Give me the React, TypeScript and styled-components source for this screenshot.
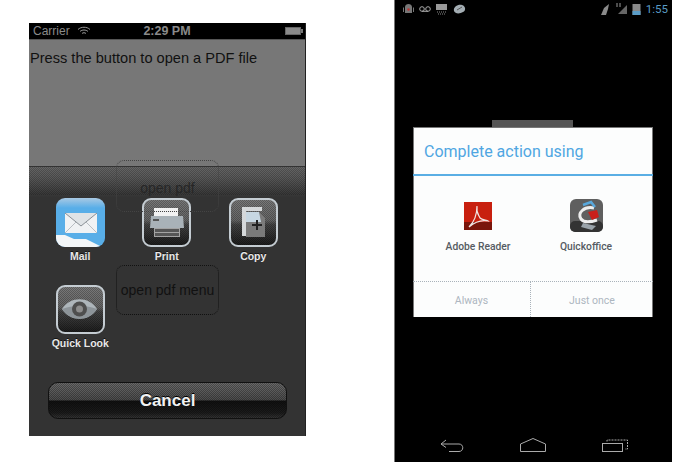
import React from 'react';
import styled, {createGlobalStyle} from 'styled-components';

const GlobalStyle = createGlobalStyle`
  html, body {
    margin: 0;
    padding: 0;
    background: #fff;
    font-family: 'Liberation Sans', Arial, sans-serif;
  }
`;

const dither = (color: string) =>
  `repeating-conic-gradient(${color} 0 25%, transparent 0 50%) 0 0 / 2px 2px`;

const Page = styled.div`
  width: 700px;
  height: 462px;
  display: flex;
  align-items: flex-start;
  overflow: hidden;
  background: #fff;
`;

const IosPhone = styled.div`
  position: relative;
  width: 276px;
  height: 413px;
  margin: 23px 0 0 29px;
  display: flex;
  flex-direction: column;
  background: #777;
  border-right: 1px solid #222;
`;

const IosStatus = styled.div`
  height: 16px;
  background: #000;
  border-bottom: 1px solid #555;
  display: flex;
  align-items: center;
  padding: 0 4px;
  color: #8a8a8a;
  font-size: 12px;
`;

const Carrier = styled.span`
  width: 44px;
`;

const IosClock = styled.span`
  margin-left: 18px;
  width: 116px;
  font-weight: bold;
  font-size: 12.5px;
  text-align: center;
  white-space: nowrap;
`;

const Battery = styled.span`
  margin-left: auto;
  width: 14px;
  height: 6px;
  background: #8a8a8a;
  border: 1px solid #666;
  position: relative;

  &::after {
    content: '';
    position: absolute;
    right: -3px;
    top: 1px;
    width: 2px;
    height: 4px;
    background: #777;
  }
`;

const IosContent = styled.div`
  flex: 1;
  padding: 10px 1px;
  font-size: 14.6px;
  color: #111;
`;

const Sheet = styled.div`
  position: relative;
  height: 270px;
  box-sizing: border-box;
  display: flex;
  flex-direction: column;
  padding: 31px 0 17px;
  border-top: 1px solid #333;
  background: linear-gradient(#666 0, #5a5a5a 10px, #444 22px, #333 30px, #333 100%);

  &::before {
    content: '';
    position: absolute;
    left: 0;
    right: 0;
    top: 0;
    height: 28px;
    background: ${dither('rgba(0, 0, 0, 0.22)')};
  }
`;

const IconGrid = styled.div`
  display: grid;
  grid-template-columns: repeat(3, 86.5px);
  grid-auto-rows: 87px;
  padding-left: 8px;
`;

const IconCell = styled.div`
  display: flex;
  flex-direction: column;
  align-items: center;
  color: #e8e8e8;
  font-size: 10.5px;
  font-weight: bold;
  text-shadow: 0 -1px 0 #111;
`;

const IconTile = styled.div<{$blue?: boolean}>`
  width: 49px;
  height: 49px;
  box-sizing: border-box;
  margin-bottom: 3px;
  border-radius: 9px;
  overflow: hidden;
  border: ${p => (p.$blue ? 'none' : '2px solid #c4ccd2')};
  background: ${p =>
    p.$blue
      ? 'linear-gradient(#a9c9e4 0, #58aee8 10px, #58aee8 100%)'
      : `${dither('rgba(0, 0, 0, 0.25)')}, linear-gradient(#7a7a7a 0, #666 45%, #444 55%, #1d1d1d 100%)`};

  svg {
    display: block;
    width: 100%;
    height: 100%;
  }
`;

const CancelButton = styled.button`
  margin: auto 18px 0 19px;
  height: 37px;
  padding: 1px 0 0;
  border-radius: 10px;
  border: 1px solid #111;
  color: #f2f2f2;
  font-family: inherit;
  font-size: 17px;
  font-weight: bold;
  text-shadow: 0 -1px 0 #000;
  background:
    ${dither('rgba(0, 0, 0, 0.3)')},
    linear-gradient(#6a6a6a 0, #4c4c4c 48%, #111 52%, #1c1c1c 85%, #333 100%);
`;

const Ghost = styled.div<{$top: number; $height: number; $faint?: boolean}>`
  position: absolute;
  left: 87px;
  top: ${p => p.$top}px;
  width: 103px;
  height: ${p => p.$height}px;
  box-sizing: border-box;
  border: 1px dotted ${p => (p.$faint ? '#444' : '#111')};
  border-radius: 8px;
  font-size: 14px;
  text-align: center;
`;

const GhostLabel = styled.span<{$top: number; $faint?: boolean}>`
  position: absolute;
  left: 0;
  right: 0;
  top: ${p => p.$top}px;
  color: ${p => (p.$faint ? '#262626' : '#111')};
`;

const AndroidPhone = styled.div`
  position: relative;
  width: 277px;
  height: 462px;
  margin-left: 88px;
  display: flex;
  flex-direction: column;
  background: #000;
  border-left: 1px solid #777;
`;

const AndroidStatus = styled.div`
  height: 18px;
  display: flex;
  align-items: center;
  gap: 5px;
  padding: 0 4px 0 8px;
`;

const StatusGlyph = styled.svg`
  display: block;
  height: 12px;
`;

const StatusSpacer = styled.div`
  flex: 1;
`;

const AndroidClock = styled.span`
  color: #5a9cc6;
  font-family: Roboto, 'Liberation Sans', sans-serif;
  font-size: 11.5px;
`;

const DialogArea = styled.div`
  flex: 1;
  display: flex;
  align-items: center;
  justify-content: center;
  padding-right: 1px;
`;

const Dialog = styled.div`
  position: relative;
  width: 240px;
  height: 190px;
  display: flex;
  flex-direction: column;
  background: #fcfdfd;
  box-shadow: inset 1px 0 0 #777, inset -1px 0 0 #777, inset 0 1px 0 #777;
  font-family: Roboto, 'Liberation Sans', sans-serif;

  &::before {
    content: '';
    position: absolute;
    left: 79px;
    top: -7px;
    width: 81px;
    height: 7px;
    background: #555;
  }
`;

const DialogTitle = styled.div`
  height: 45px;
  padding: 2px 0 0 11px;
  display: flex;
  align-items: center;
  border-bottom: 2px solid #5aaee4;
  color: #4fa6e2;
  font-size: 16px;
`;

const AppRow = styled.div`
  flex: 1;
  display: grid;
  grid-template-columns: 108px 108px;
  justify-content: center;
  padding-right: 2px;
`;

const AppCell = styled.div`
  display: flex;
  flex-direction: column;
  align-items: center;
  color: #555b62;
  font-size: 10.3px;
  font-weight: 500;
`;

const AppIconSlot = styled.div`
  height: 33px;
  margin: 23px 0 8px;
  display: flex;
  align-items: center;

  svg {
    display: block;
  }
`;

const DialogFooter = styled.div`
  height: 35px;
  display: grid;
  grid-template-columns: 117px 123px;
  border-top: 1px dotted #a9b2ba;
`;

const FooterButton = styled.div<{$divider?: boolean}>`
  display: flex;
  align-items: center;
  justify-content: center;
  padding-top: 1px;
  color: #adb6c0;
  font-size: 10.5px;
  border-left: ${p => (p.$divider ? '1px dotted #a9b2ba' : 'none')};
`;

const NavBar = styled.div`
  height: 36px;
  display: flex;
  align-items: flex-start;
  gap: 56px;
  padding: 12px 0 0 45px;
  box-sizing: border-box;

  svg {
    display: block;
  }
`;

const MailIcon = () => (
  <svg viewBox="0 0 49 49">
    <path d="M0 37 L9 37 L18 41 L30 41 L38 45 L46 49 L0 49 Z" fill="#f3f6f8" />
    <path d="M9 15 H41 V35 H9 Z" fill="#f0f2f4" />
    <path d="M9 15 L25 28 L41 15" fill="#dfe3e6" stroke="#8a9096" strokeWidth="1" />
    <path d="M9 35 L20 24 M41 35 L30 24" stroke="#b9bec3" strokeWidth="1" />
  </svg>
);

const PrintIcon = () => (
  <svg viewBox="0 0 45 45">
    <rect x="10" y="8" width="24" height="8" fill="#f2f2f2" />
    <path d="M7 16 H39 L40 28 H6 Z" fill="#a9b2b8" />
    <rect x="9" y="19" width="6" height="2" fill="#555" />
    <rect x="10.5" y="28.5" width="25" height="8" fill="#565656" stroke="#a3a3a3" />
    <path d="M11 32.5 H35" stroke="#a3a3a3" />
  </svg>
);

const CopyIcon = () => (
  <svg viewBox="0 0 45 45">
    <path d="M11 7 H31 V11 H15 V36 H11 Z" fill="#d5d8da" />
    <path d="M15 12 H28 L34 18 V37 H15 Z" fill="#7b7b7b" />
    <path d="M15 12 H28 L30 22 H15 Z" fill="#c7d7e2" />
    <path d="M26 20 V30 M21 25 H31" stroke="#222" strokeWidth="2" />
  </svg>
);

const EyeIcon = () => (
  <svg viewBox="0 0 45 45">
    <path d="M4 22 C12 9 31 9 39 22 C31 35 12 35 4 22 Z" fill="#aeb6bb" />
    <path d="M4 22 C14 18 29 18 39 22 C31 35 12 35 4 22 Z" fill="#8d9499" />
    <circle cx="21.5" cy="22" r="7.5" fill="#4e4e4e" />
    <circle cx="21.5" cy="22" r="3.5" fill="#8d8d8d" />
  </svg>
);

const AdobeIcon = () => (
  <svg width="28" height="28" viewBox="0 0 28 28">
    <rect width="28" height="28" fill="#c8200f" />
    <rect y="20" width="28" height="8" fill="#7a150b" />
    <path
      d="M13 4 C12 10 14 12 16 16 C18 18 23 18 24 19 C19 18 12 19 5 25 C10 20 13 14 13 4 Z"
      fill="none"
      stroke="#f1e6e4"
      strokeWidth="1.2"
    />
  </svg>
);

const QuickofficeIcon = () => (
  <svg width="33" height="33" viewBox="0 0 33 33">
    <rect width="33" height="33" rx="6" fill="#5f5f5f" />
    <rect y="22" width="33" height="11" rx="5" fill="#333" />
    <path d="M13 24 L26 27 L22 31 L11 28 Z" fill="#9aa3aa" />
    <path d="M24 9 C14 7 7 14 11 20 C14 24 21 23 27 21" fill="none" stroke="#eee" strokeWidth="3" />
    <path d="M18 13 L27 11 L29 18 L22 21 Z" fill="#c8201a" />
    <path d="M13 6 L21 3 L25 8" fill="none" stroke="#58a8dc" strokeWidth="2.5" />
  </svg>
);

const App = () => (
  <Page>
    <GlobalStyle />
    <IosPhone>
      <IosStatus>
        <Carrier>Carrier</Carrier>
        <svg width="14" height="10" viewBox="0 0 14 10" fill="none" stroke="#9a9a9a">
          <path d="M1 3.5 C4 .5 10 .5 13 3.5 M3 5.5 C5 3.5 9 3.5 11 5.5 M5 7.5 C6 6.5 8 6.5 9 7.5" />
        </svg>
        <IosClock>2:29 PM</IosClock>
        <Battery />
      </IosStatus>
      <IosContent>Press the button to open a PDF file</IosContent>
      <Sheet>
        <IconGrid>
          <IconCell>
            <IconTile $blue>
              <MailIcon />
            </IconTile>
            Mail
          </IconCell>
          <IconCell>
            <IconTile>
              <PrintIcon />
            </IconTile>
            Print
          </IconCell>
          <IconCell>
            <IconTile>
              <CopyIcon />
            </IconTile>
            Copy
          </IconCell>
          <IconCell>
            <IconTile>
              <EyeIcon />
            </IconTile>
            Quick Look
          </IconCell>
        </IconGrid>
        <CancelButton>Cancel</CancelButton>
      </Sheet>
      <Ghost $top={137} $height={52} $faint>
        <GhostLabel $top={19} $faint>
          open pdf
        </GhostLabel>
      </Ghost>
      <Ghost $top={242} $height={50}>
        <GhostLabel $top={16}>open pdf menu</GhostLabel>
      </Ghost>
    </IosPhone>

    <AndroidPhone>
      <AndroidStatus>
        <StatusGlyph width="11" viewBox="0 0 11 12">
          <path d="M2 4 C2 0 9 0 9 4 V10 H2 Z M0 4.5 H1 V9 H0 Z M10 4.5 H11 V9 H10 Z" fill="#777" />
          <circle cx="5.5" cy="6.5" r="1.2" fill="#b33" />
        </StatusGlyph>
        <StatusGlyph width="12" viewBox="0 0 12 12" fill="none" stroke="#aaa">
          <circle cx="3" cy="6" r="2.3" />
          <circle cx="9" cy="6" r="2.3" />
          <path d="M3 8.3 H9" />
        </StatusGlyph>
        <StatusGlyph width="12" viewBox="0 0 12 12">
          <rect y="1" width="11" height="6" fill="#999" />
          <path d="M1 9 H11 M2 11 H10" stroke="#888" strokeDasharray="1 1" />
        </StatusGlyph>
        <StatusGlyph width="13" viewBox="0 0 13 12">
          <path d="M1 8 C0 4 5 1 9 2 C13 3 13 8 10 9 C7 11 2 11 1 8 Z" fill="#a3adb3" />
          <path d="M4 7 L9 4" stroke="#555" />
        </StatusGlyph>
        <StatusSpacer />
        <StatusGlyph width="10" viewBox="0 0 10 12">
          <path d="M1 12 L4 5 L9 1 L8 6 L6 12 Z" fill="#8a8a8a" />
        </StatusGlyph>
        <StatusGlyph width="12" viewBox="0 0 12 12">
          <path d="M3 11 L12 2 V11 Z" fill="#666" />
          <path d="M2 0 V4 M5 0 V4" stroke="#999" />
        </StatusGlyph>
        <StatusGlyph width="9" viewBox="0 0 9 12">
          <rect x=".5" y="1" width="8" height="11" fill="#888" />
          <rect x=".5" y="8" width="8" height="4" fill="#5a9cc6" />
        </StatusGlyph>
        <AndroidClock>1:55</AndroidClock>
      </AndroidStatus>
      <DialogArea>
        <Dialog>
          <DialogTitle>Complete action using</DialogTitle>
          <AppRow>
            <AppCell>
              <AppIconSlot>
                <AdobeIcon />
              </AppIconSlot>
              Adobe Reader
            </AppCell>
            <AppCell>
              <AppIconSlot>
                <QuickofficeIcon />
              </AppIconSlot>
              Quickoffice
            </AppCell>
          </AppRow>
          <DialogFooter>
            <FooterButton>Always</FooterButton>
            <FooterButton $divider>Just once</FooterButton>
          </DialogFooter>
        </Dialog>
      </DialogArea>
      <NavBar>
        <svg width="24" height="14" viewBox="0 0 24 14" fill="none" stroke="#aaa" strokeWidth="1">
          <path d="M6 2 L1 6 L6 9.5 M1 6 H19 C24 6 24 13.5 19 13.5 H9" />
        </svg>
        <svg width="26" height="14" viewBox="0 0 26 14" fill="none" stroke="#aaa" strokeWidth="1">
          <path d="M.5 6 L13 .5 L25.5 6 V13.5 H.5 Z" />
        </svg>
        <svg width="26" height="14" viewBox="0 0 26 14" fill="none" stroke="#aaa" strokeWidth="1">
          <rect x=".5" y="5.5" width="20" height="8" />
          <path d="M5 3.5 V2 H25.5 V11 H23" strokeDasharray="2 1" />
        </svg>
      </NavBar>
    </AndroidPhone>
  </Page>
);

export default App;
